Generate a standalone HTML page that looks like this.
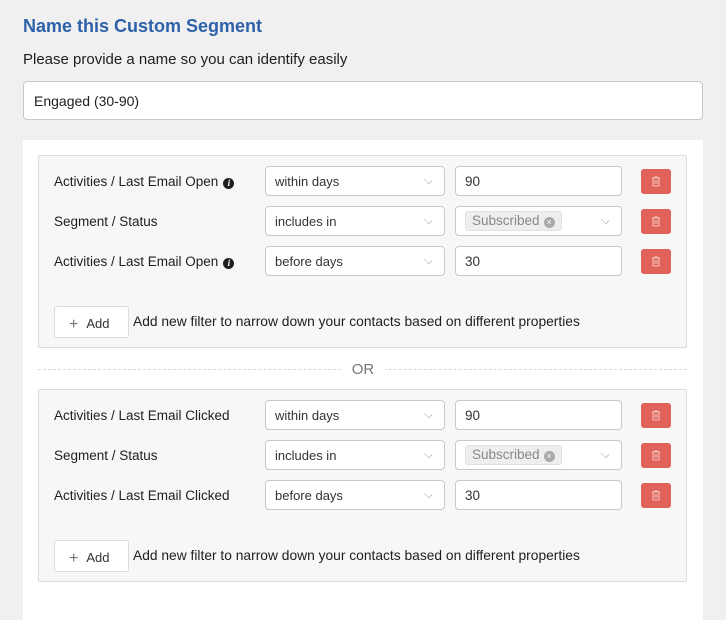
<!DOCTYPE html>
<html><head><style>
*{box-sizing:border-box;margin:0;padding:0}
body{width:726px;height:612px;background:#f0f0f1;font-family:"Liberation Sans",Arial,sans-serif;color:#1e1e1e;position:relative;overflow:hidden}
.a{position:absolute}
h1{position:absolute;left:23px;top:16px;font-size:18px;font-weight:bold;color:#2e62a8}
.sub{left:23px;top:51px;font-size:15px;color:#1e1e1e}
.name{left:23px;top:81px;width:680px;height:39px;background:#fff;border:1px solid #c8c8c8;border-radius:4px;font-size:14px;padding:11px 10px;color:#1e1e1e}
.panel{left:23px;top:140px;width:680px;height:480px;background:#fff}
.grp{left:38px;width:649px;height:193px;background:#f7f7f8;border:1px solid #dcdcde;border-radius:2px}
.lbl{font-size:13.5px;color:#1e1e1e;left:54px}
.info{display:inline-block;width:11px;height:11px;border-radius:50%;background:#1e1e1e;color:#fff;font-size:9px;font-weight:bold;font-style:italic;text-align:center;line-height:11px;margin-left:5px;vertical-align:0px;font-family:"Liberation Serif",serif}
.sel{left:265px;width:180px;height:30px;background:#fff;border:1px solid #c8c8cc;border-radius:4px;font-size:13px;padding:7px 9px;color:#333}
.chev{position:absolute;right:12px;top:9px;width:8px;height:8px;border-right:1px solid #bbb;border-bottom:1px solid #bbb;transform:rotate(45deg) scale(.9,.6);transform-origin:center}
.inp{left:455px;width:167px;height:30px;background:#fff;border:1px solid #c8c8cc;border-radius:4px;font-size:13.5px;padding:7px 9px;color:#333}
.tag{position:absolute;left:9px;top:4px;height:20px;background:#eeeef0;border:1px solid #e0e0e4;border-radius:3px;font-size:13.5px;color:#888;padding:1px 6px}
.tag i{display:inline-block;width:11px;height:11px;border-radius:50%;background:#aaa;color:#fff;font-style:normal;font-size:9px;line-height:11px;text-align:center;margin-left:4px;vertical-align:0}
.del{left:641px;width:30px;height:25px;background:#e0625a;border-radius:3px}
.del svg{position:absolute;left:10px;top:7px}
.add{left:54px;width:75px;height:32px;background:#fff;border:1px solid #dcdcde;border-radius:3px;font-size:13px;color:#333;padding:8px 0 0 14px}
.add b{font-weight:normal;color:#777;font-size:16px;margin-right:8px;position:relative;top:1px}
.addt{left:133px;font-size:13.8px;color:#1e1e1e}
.or{left:38px;top:369px;width:649px;border-top:1px dashed #d8d8d8}
.ort{left:341px;top:361px;width:44px;text-align:center;background:#fff;font-size:15px;color:#777}
</style></head><body>
<h1>Name this Custom Segment</h1>
<div class="a sub">Please provide a name so you can identify easily</div>
<div class="a name">Engaged (30-90)</div>
<div class="a panel"></div>

<div class="a grp" style="top:155px"></div>
<div class="a lbl" style="top:174px">Activities / Last Email Open<span class="info">i</span></div>
<div class="a sel" style="top:166px">within days<span class="chev"></span></div>
<div class="a inp" style="top:166px">90</div>
<div class="a del" style="top:169px"><svg width="10" height="11" viewBox="0 0 10 11"><path d="M1 2h8M3.5 2V1h3v1M2 2.5v7.5h6V2.5M4 4v4M6 4v4" stroke="#f6c4c0" fill="none" stroke-width="1"/></svg></div>

<div class="a lbl" style="top:214px">Segment / Status</div>
<div class="a sel" style="top:206px">includes in<span class="chev"></span></div>
<div class="a inp" style="top:206px"><span class="tag">Subscribed<i>×</i></span><span class="chev"></span></div>
<div class="a del" style="top:209px"><svg width="10" height="11" viewBox="0 0 10 11"><path d="M1 2h8M3.5 2V1h3v1M2 2.5v7.5h6V2.5M4 4v4M6 4v4" stroke="#f6c4c0" fill="none" stroke-width="1"/></svg></div>

<div class="a lbl" style="top:254px">Activities / Last Email Open<span class="info">i</span></div>
<div class="a sel" style="top:246px">before days<span class="chev"></span></div>
<div class="a inp" style="top:246px">30</div>
<div class="a del" style="top:249px"><svg width="10" height="11" viewBox="0 0 10 11"><path d="M1 2h8M3.5 2V1h3v1M2 2.5v7.5h6V2.5M4 4v4M6 4v4" stroke="#f6c4c0" fill="none" stroke-width="1"/></svg></div>

<div class="a add" style="top:306px"><b>+</b>Add</div>
<div class="a addt" style="top:314px">Add new filter to narrow down your contacts based on different properties</div>

<div class="a or"></div>
<div class="a ort">OR</div>

<div class="a grp" style="top:389px"></div>
<div class="a lbl" style="top:408px">Activities / Last Email Clicked</div>
<div class="a sel" style="top:400px">within days<span class="chev"></span></div>
<div class="a inp" style="top:400px">90</div>
<div class="a del" style="top:403px"><svg width="10" height="11" viewBox="0 0 10 11"><path d="M1 2h8M3.5 2V1h3v1M2 2.5v7.5h6V2.5M4 4v4M6 4v4" stroke="#f6c4c0" fill="none" stroke-width="1"/></svg></div>

<div class="a lbl" style="top:448px">Segment / Status</div>
<div class="a sel" style="top:440px">includes in<span class="chev"></span></div>
<div class="a inp" style="top:440px"><span class="tag">Subscribed<i>×</i></span><span class="chev"></span></div>
<div class="a del" style="top:443px"><svg width="10" height="11" viewBox="0 0 10 11"><path d="M1 2h8M3.5 2V1h3v1M2 2.5v7.5h6V2.5M4 4v4M6 4v4" stroke="#f6c4c0" fill="none" stroke-width="1"/></svg></div>

<div class="a lbl" style="top:488px">Activities / Last Email Clicked</div>
<div class="a sel" style="top:480px">before days<span class="chev"></span></div>
<div class="a inp" style="top:480px">30</div>
<div class="a del" style="top:483px"><svg width="10" height="11" viewBox="0 0 10 11"><path d="M1 2h8M3.5 2V1h3v1M2 2.5v7.5h6V2.5M4 4v4M6 4v4" stroke="#f6c4c0" fill="none" stroke-width="1"/></svg></div>

<div class="a add" style="top:540px"><b>+</b>Add</div>
<div class="a addt" style="top:548px">Add new filter to narrow down your contacts based on different properties</div>
</body></html>
